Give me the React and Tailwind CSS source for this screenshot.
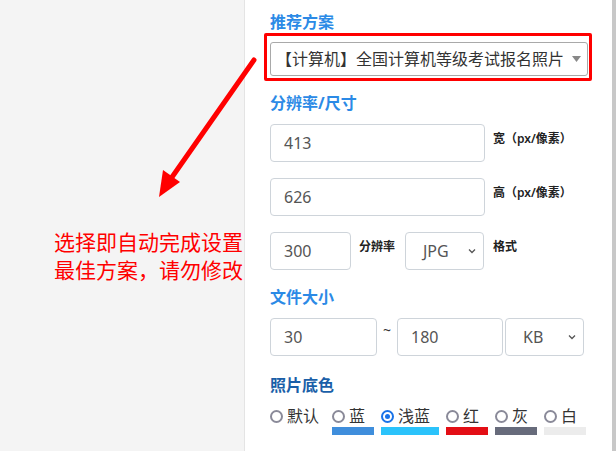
import React from 'react'

const font = { fontFamily: '"Noto Sans", "Noto Sans CJK SC", sans-serif' }

function Heading({ children, dark }) {
  return (
    <div className={`text-[16px] font-bold leading-[20px] ${dark ? 'text-[#1a5fa8]' : 'text-[#2b8ae6]'}`}>
      {children}
    </div>
  )
}

function Input({ value, w }) {
  return (
    <div className={`${w} h-[38px] shrink-0 border border-[#ced4da] rounded-[4px] flex items-center pl-[13px] text-[16px] text-[#555]`}>
      {value}
    </div>
  )
}

function Select({ value, w }) {
  return (
    <div className={`${w} h-[38px] shrink-0 border border-[#ced4da] rounded-[4px] flex items-center justify-between pl-[17px] pr-[6px] text-[16px] text-[#555]`}>
      <span>{value}</span>
      <svg width="10" height="10" viewBox="0 0 10 10" fill="none" stroke="#555" strokeWidth="1.3">
        <path d="M2 3.5 L5 6.5 L8 3.5" />
      </svg>
    </div>
  )
}

function Label({ children, className = '' }) {
  return <div className={`text-[12px] font-semibold text-[#222] leading-[16px] whitespace-nowrap ${className}`}>{children}</div>
}

const colors = [
  { name: '蓝', w: 'w-[42px]', bar: 'bg-[#3f8edc]' },
  { name: '浅蓝', w: 'w-[58px]', bar: 'bg-[#2bc3fb]', checked: true },
  { name: '红', w: 'w-[42px]', bar: 'bg-[#e30e15]' },
  { name: '灰', w: 'w-[42px]', bar: 'bg-[#676b7b]' },
  { name: '白', w: 'w-[42px]', bar: 'bg-[#ececec]' },
]

function Radio({ checked }) {
  return checked ? (
    <span className="w-[13px] h-[13px] rounded-full border-[2px] border-[#1a73e8] flex items-center justify-center shrink-0">
      <span className="w-[5px] h-[5px] rounded-full bg-[#1a73e8]" />
    </span>
  ) : (
    <span className="w-[13px] h-[13px] rounded-full border-[2px] border-[#8a8a99] shrink-0" />
  )
}

export default function App() {
  return (
    <div className="relative flex w-[616px] h-[451px] overflow-hidden bg-white" style={font}>
      <div className="w-[245px] shrink-0 bg-[#f4f4f4] border-r border-[#e4e4e4] pt-[228px] pl-[54px]">
        <div className="text-[21px] leading-[28px] text-[#ff0000] whitespace-nowrap">
          选择即自动完成设置<br />最佳方案，请勿修改
        </div>
      </div>

      <div className="flex-1 bg-white pl-[25px] pt-[12px]">
        <Heading>推荐方案</Heading>
        <div className="mt-[10px] w-[318px] h-[34px] border border-[#a9a9a9] rounded-[3px] flex items-center justify-between pl-[5px] pr-[6px] text-[16px] text-[#333] whitespace-nowrap">
          <span>【计算机】全国计算机等级考试报名照片</span>
          <svg width="9" height="6" viewBox="0 0 9 6"><path d="M0 0 H9 L4.5 6 Z" fill="#888" /></svg>
        </div>

        <div className="mt-[17px]"><Heading>分辨率/尺寸</Heading></div>
        <div className="mt-[11px] flex items-start gap-[8px]">
          <Input value="413" w="w-[215px]" />
          <Label className="mt-[7px]">宽（px/像素）</Label>
        </div>
        <div className="mt-[16px] flex items-start gap-[8px]">
          <Input value="626" w="w-[215px]" />
          <Label className="mt-[7px]">高（px/像素）</Label>
        </div>
        <div className="mt-[16px] flex items-start">
          <Input value="300" w="w-[81px]" />
          <Label className="ml-[8px] mt-[7px] w-[46px]">分辨率</Label>
          <Select value="JPG" w="w-[79px]" />
          <Label className="ml-[9px] mt-[7px]">格式</Label>
        </div>

        <div className="mt-[17px]"><Heading>文件大小</Heading></div>
        <div className="mt-[11px] flex items-start">
          <Input value="30" w="w-[107px]" />
          <span className="w-[20px] text-center text-[14px] text-[#333] leading-[16px] mt-[4px]">~</span>
          <Input value="180" w="w-[106px]" />
          <div className="ml-[2px]"><Select value="KB" w="w-[79px]" /></div>
        </div>

        <div className="mt-[19px]"><Heading dark>照片底色</Heading></div>
        <div className="mt-[10px] flex items-start">
          <div className="w-[62px] flex items-center gap-[4px] h-[22px] text-[16px] text-[#333]">
            <Radio />
            <span>默认</span>
          </div>
          {colors.map(c => (
            <div key={c.name} className={`${c.w} mr-[7px] flex flex-col`}>
              <div className="flex items-center gap-[4px] h-[22px] text-[16px] text-[#333]">
                <Radio checked={c.checked} />
                <span>{c.name}</span>
              </div>
              <div className={`h-[8px] ${c.bar}`} />
            </div>
          ))}
        </div>
      </div>

      <div className="w-[4px] shrink-0 bg-[#c8c8c8]" />

      <div className="absolute left-[264px] top-[33px] w-[328px] h-[48px] border-[3px] border-[#ff0000] rounded-[2px] pointer-events-none" />

      <svg className="absolute left-0 top-0 pointer-events-none" width="616" height="451" viewBox="0 0 616 451">
        <line x1="254" y1="60" x2="170" y2="180" stroke="#ff0000" strokeWidth="5" strokeLinecap="round" />
        <path d="M159 197 L163 170 L180 182 Z" fill="#ff0000" />
      </svg>
    </div>
  )
}
